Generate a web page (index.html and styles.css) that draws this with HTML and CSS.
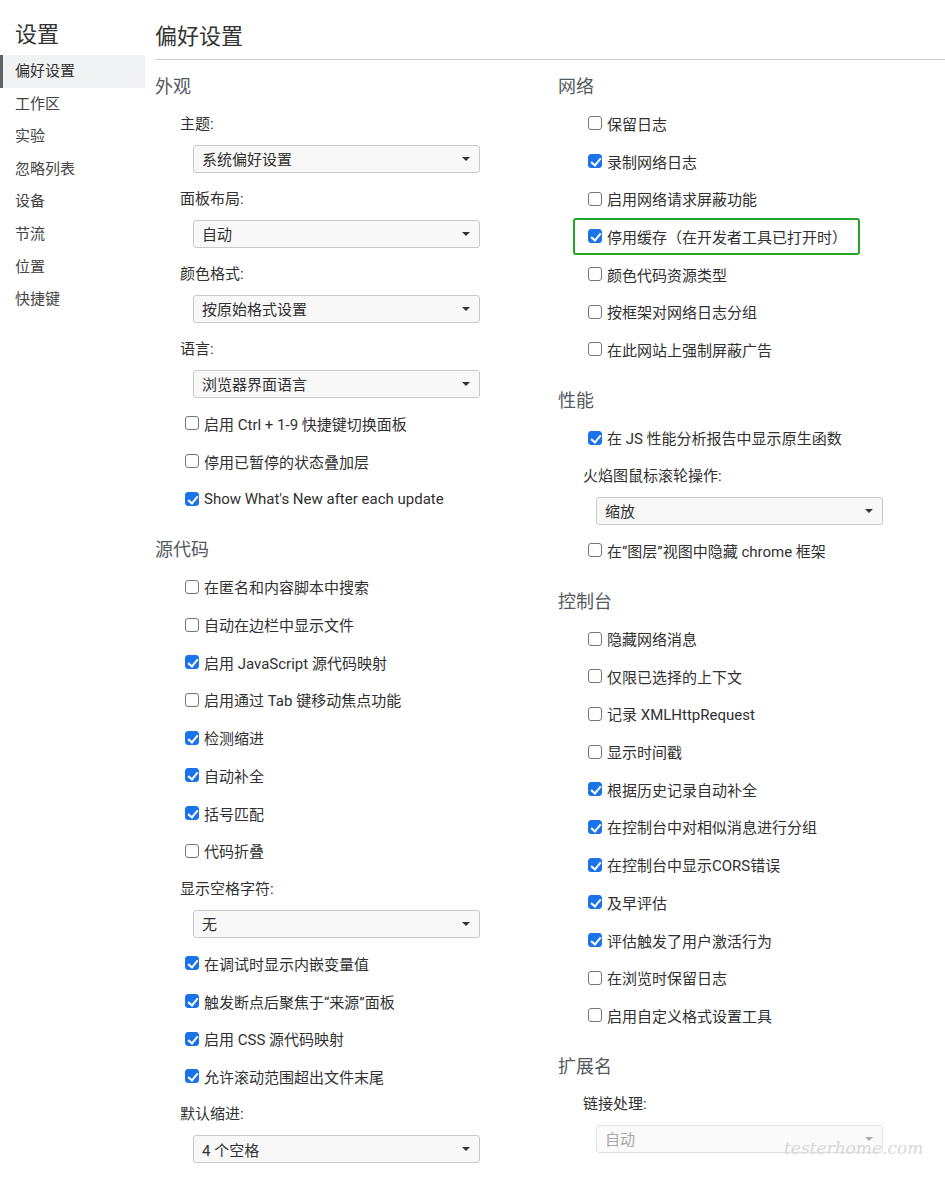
FILE: index.html
```html
<!DOCTYPE html>
<html lang="zh-CN">
<head>
<meta charset="UTF-8">
<meta name="viewport" content="width=device-width, initial-scale=1.0">
<title>设置 - 偏好设置</title>
<link rel="stylesheet" href="styles.css">
</head>
<body>
<div class="layout">
  <aside class="sidebar">
    <h1 class="sidebar-title">设置</h1>
    <ul class="side-menu">
      <li class="side-item active">偏好设置</li>
      <li class="side-item">工作区</li>
      <li class="side-item">实验</li>
      <li class="side-item">忽略列表</li>
      <li class="side-item">设备</li>
      <li class="side-item">节流</li>
      <li class="side-item">位置</li>
      <li class="side-item">快捷键</li>
    </ul>
  </aside>
  <main class="content">
    <h2 class="page-title">偏好设置</h2>
    <div class="columns">
      <div class="col">
        <h3 class="section-title">外观</h3>
        <div class="field-label">主题:</div>
        <div class="select"><span>系统偏好设置</span><i class="caret"></i></div>
        <div class="field-label">面板布局:</div>
        <div class="select"><span>自动</span><i class="caret"></i></div>
        <div class="field-label">颜色格式:</div>
        <div class="select"><span>按原始格式设置</span><i class="caret"></i></div>
        <div class="field-label">语言:</div>
        <div class="select"><span>浏览器界面语言</span><i class="caret"></i></div>
        <label class="check"><span class="box"></span>启用 Ctrl + 1-9 快捷键切换面板</label>
        <label class="check"><span class="box"></span>停用已暂停的状态叠加层</label>
        <label class="check"><span class="box on"></span>Show What's New after each update</label>

        <h3 class="section-title">源代码</h3>
        <label class="check"><span class="box"></span>在匿名和内容脚本中搜索</label>
        <label class="check"><span class="box"></span>自动在边栏中显示文件</label>
        <label class="check"><span class="box on"></span>启用 JavaScript 源代码映射</label>
        <label class="check"><span class="box"></span>启用通过 Tab 键移动焦点功能</label>
        <label class="check"><span class="box on"></span>检测缩进</label>
        <label class="check"><span class="box on"></span>自动补全</label>
        <label class="check"><span class="box on"></span>括号匹配</label>
        <label class="check"><span class="box"></span>代码折叠</label>
        <div class="field-label">显示空格字符:</div>
        <div class="select"><span>无</span><i class="caret"></i></div>
        <label class="check"><span class="box on"></span>在调试时显示内嵌变量值</label>
        <label class="check"><span class="box on"></span>触发断点后聚焦于“来源”面板</label>
        <label class="check"><span class="box on"></span>启用 CSS 源代码映射</label>
        <label class="check"><span class="box on"></span>允许滚动范围超出文件末尾</label>
        <div class="field-label">默认缩进:</div>
        <div class="select"><span>4 个空格</span><i class="caret"></i></div>
      </div>

      <div class="col">
        <h3 class="section-title">网络</h3>
        <label class="check"><span class="box"></span>保留日志</label>
        <label class="check"><span class="box on"></span>录制网络日志</label>
        <label class="check"><span class="box"></span>启用网络请求屏蔽功能</label>
        <label class="check highlight"><span class="box on"></span>停用缓存（在开发者工具已打开时）</label>
        <label class="check"><span class="box"></span>颜色代码资源类型</label>
        <label class="check"><span class="box"></span>按框架对网络日志分组</label>
        <label class="check"><span class="box"></span>在此网站上强制屏蔽广告</label>

        <h3 class="section-title">性能</h3>
        <label class="check"><span class="box on"></span>在 JS 性能分析报告中显示原生函数</label>
        <div class="field-label">火焰图鼠标滚轮操作:</div>
        <div class="select"><span>缩放</span><i class="caret"></i></div>
        <label class="check"><span class="box"></span>在“图层”视图中隐藏 chrome 框架</label>

        <h3 class="section-title">控制台</h3>
        <label class="check"><span class="box"></span>隐藏网络消息</label>
        <label class="check"><span class="box"></span>仅限已选择的上下文</label>
        <label class="check"><span class="box"></span>记录 XMLHttpRequest</label>
        <label class="check"><span class="box"></span>显示时间戳</label>
        <label class="check"><span class="box on"></span>根据历史记录自动补全</label>
        <label class="check"><span class="box on"></span>在控制台中对相似消息进行分组</label>
        <label class="check"><span class="box on"></span>在控制台中显示CORS错误</label>
        <label class="check"><span class="box on"></span>及早评估</label>
        <label class="check"><span class="box on"></span>评估触发了用户激活行为</label>
        <label class="check"><span class="box"></span>在浏览时保留日志</label>
        <label class="check"><span class="box"></span>启用自定义格式设置工具</label>

        <h3 class="section-title">扩展名</h3>
        <div class="field-label">链接处理:</div>
        <div class="select disabled"><span>自动</span><i class="caret"></i></div>
      </div>
    </div>
  </main>
</div>
<div class="watermark">testerhome.com</div>
</body>
</html>
```

FILE: styles.css
```css
*{margin:0;padding:0;box-sizing:border-box;}
:root{
  --text:#303030;
  --heading:#555a60;
  --blue:#1a73e8;
  --border:#c9c9c9;
  --green:#22a626;
}
body{font-family:Roboto,"Noto Sans CJK SC",sans-serif;font-size:15px;color:var(--text);background:#fff;overflow:hidden;}
.layout{display:flex;min-height:1181px;}

.sidebar{width:145px;flex-shrink:0;}
.sidebar-title{font-size:22px;font-weight:normal;color:#333;height:55px;line-height:24px;padding:23px 0 0 15px;}
.side-menu{list-style:none;}
.side-item{height:32.6px;line-height:32px;padding-left:15px;color:#444;}
.side-item.active{background:#f1f2f4;border-left:3px solid #5f6368;padding-left:12px;color:#303030;}

.content{flex:1;padding-left:10px;}
.page-title{font-size:22px;font-weight:normal;color:#333;line-height:24px;padding-top:25px;height:60px;border-bottom:1px solid #d0d0d0;}
.columns{display:grid;grid-template-columns:403px 1fr;}
.col{display:flex;flex-direction:column;align-items:flex-start;}

.section-title{font-size:18px;font-weight:normal;color:var(--heading);line-height:24px;margin-top:20.5px;margin-bottom:6px;}
.col .section-title:first-child{margin-top:14.5px;}

.check{display:flex;align-items:center;gap:5px;height:37.7px;padding-left:30px;white-space:nowrap;}
.check.highlight{margin-left:15px;padding-left:13px;padding-right:11px;border:2px solid var(--green);border-radius:3px;}
.box{width:14px;height:14px;border:1px solid #767676;border-radius:3px;flex-shrink:0;position:relative;}
.box.on{background:var(--blue);border-color:var(--blue);}
.box.on::after{content:"";position:absolute;left:4px;top:1px;width:4px;height:8px;border:solid #fff;border-width:0 2px 2px 0;transform:rotate(40deg);}

.field-label{height:38px;line-height:38px;padding-left:25px;}
.select{margin:2px 0 7px 38px;width:287px;height:28px;border:1px solid var(--border);border-radius:3px;background:#f8f8f8;display:flex;align-items:center;justify-content:space-between;padding:0 9px 0 8px;}
.caret{width:0;height:0;border-left:4px solid transparent;border-right:4px solid transparent;border-top:4px solid #333;}
.select.disabled{background:#fafafa;border-color:#e2e2e2;color:#a8a8a8;}
.select.disabled .caret{border-top-color:#aaa;}

.watermark{position:absolute;left:784px;top:1138px;font-family:"DejaVu Serif",serif;font-style:italic;font-size:17px;color:#d8d8d8;}
```
